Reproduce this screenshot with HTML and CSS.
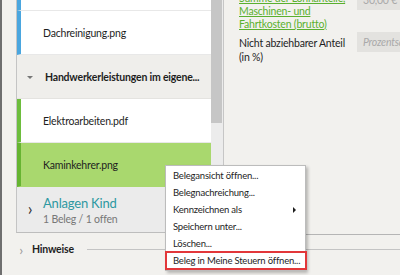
FILE: index.html
```html
<!DOCTYPE html>
<html lang="de">
<head>
  <meta charset="UTF-8" />
  <title>Belege</title>
  <link rel="stylesheet" href="styles.css">
</head>
<body>

  <div class="window">
    <div class="edge"></div>

    <div class="content">
      <div class="panels">

        <!-- Belegliste -->
        <div class="list-panel">
          <div class="list">
            <div class="item bar-blue"></div>
            <div class="item bar-blue">Dachreinigung.png</div>
            <div class="group">
              <span class="caret-down"></span>
              <span class="group-title">Handwerkerleistungen im eigene...</span>
            </div>
            <div class="item bar-green">Elektroarbeiten.pdf</div>
            <div class="item bar-green selected">Kaminkehrer.png</div>
            <div class="group closed">
              <span class="chevron">&rsaquo;</span>
              <div>
                <div class="closed-title">Anlagen Kind</div>
                <div class="closed-sub">1 Beleg / 1 offen</div>
              </div>
            </div>
          </div>
          <div class="scrollbar"><div class="thumb"></div></div>
        </div>

        <!-- Details -->
        <div class="detail">
          <div class="row first">
            <a class="label link" href="#">Summe der Lohnanteile,<br>Maschinen- und<br>Fahrtkosten (brutto)</a>
            <div class="field">30,00 €</div>
          </div>
          <div class="row">
            <div class="label">Nicht abziehbarer Anteil<br>(in %)</div>
            <div class="field placeholder">Prozentsatz</div>
          </div>
        </div>
      </div>

      <div class="hinweise">
        <span class="chevron small">&rsaquo;</span>
        <span class="hinweise-title">Hinweise</span>
        <span class="rule"></span>
      </div>
    </div>

    <!-- Kontextmenü -->
    <ul class="context-menu">
      <li>Belegansicht öffnen...</li>
      <li>Belegnachreichung...</li>
      <li class="has-sub">Kennzeichnen als</li>
      <li>Speichern unter...</li>
      <li>Löschen...</li>
      <li class="marked">Beleg in Meine Steuern öffnen...</li>
    </ul>
  </div>

</body>
</html>
```

FILE: styles.css
```css
/* Grundlayout */
body {
  margin: 0;
  background: #f2f1ee;
  font-family: Lato, "Open Sans", Arial, sans-serif;
  font-size: 10.5px;
  letter-spacing: -0.2px;
  color: #1e1e1e;
  overflow: hidden;
}

.window {
  position: relative;
  display: flex;
  width: 400px;
  height: 275px;
  overflow: hidden;
}

.edge {
  width: 2px;
  background: #6f6f6f;
  flex-shrink: 0;
}

.content {
  flex: 1;
  display: flex;
  flex-direction: column;
  min-width: 0;
}

.panels {
  display: flex;
  align-items: flex-start;
  padding-left: 14px;
}

/* Liste */
.list-panel {
  display: flex;
  width: 206px;
  height: 232px;
  border-left: 1px solid #c4c4c4;
  border-bottom: 1px solid #bdbdbd;
  flex-shrink: 0;
  overflow: hidden;
}

.list {
  width: 194px;
  margin-top: -33px;
}

.item {
  display: flex;
  align-items: center;
  height: 43px;
  padding-left: 22px;
  background: #fff;
  border-bottom: 1px solid #e8e8e8;
  border-left: 4px solid transparent;
  white-space: nowrap;
}

.bar-blue { border-left-color: #4aa6df; }
.bar-green { border-left-color: #6dbd3d; }

.item.selected {
  background: #a9d86e;
  border-left-color: #66b431;
  border-bottom-color: #a9d86e;
}

.group {
  display: flex;
  align-items: center;
  height: 43px;
  background: #efeeeb;
  border-bottom: 1px solid #e4e3e0;
  white-space: nowrap;
  overflow: hidden;
}

.caret-down {
  width: 0;
  height: 0;
  margin: 1px 12px 0 10px;
  border-left: 3px solid transparent;
  border-right: 3px solid transparent;
  border-top: 3px solid #777;
}

.group-title {
  font-weight: bold;
}

.group.closed {
  height: 45px;
  align-items: flex-start;
  background: #ebebeb;
  border-bottom: none;
}

.chevron {
  width: 26px;
  text-align: center;
  font-size: 17px;
  line-height: 1;
  color: #333;
  margin-top: 13px;
}

.closed-title {
  margin-top: 7px;
  font-size: 13px;
  line-height: 18px;
  color: #2d98a1;
}

.closed-sub {
  line-height: 14px;
  color: #777;
}

.scrollbar {
  width: 12px;
  background: #ececec;
}

.thumb {
  width: 11px;
  height: 123px;
  background: #c6c6c6;
}

/* Detailbereich */
.detail {
  flex: 1;
  height: 234px;
  border-left: 1px solid #c6c6c6;
  border-bottom: 1px solid #b5b5b5;
  padding-left: 15px;
  overflow: hidden;
}

.row {
  display: flex;
  margin-bottom: 1px;
}

.row.first {
  margin-top: -10px;
}

.label {
  width: 118px;
  flex-shrink: 0;
  padding-top: 4px;
  line-height: 14px;
  white-space: nowrap;
}

.row.first .label {
  padding-top: 2px;
  line-height: 13px;
}

.link {
  color: #5ab02f;
  text-decoration: underline;
}

.field {
  flex: 1;
  height: 20px;
  line-height: 20px;
  padding-left: 6px;
  background: #e3e2df;
  color: #a9a9a9;
  white-space: nowrap;
}

.field.placeholder {
  font-style: italic;
}

/* Hinweise */
.hinweise {
  display: flex;
  align-items: center;
  height: 28px;
  padding-left: 16px;
}

.chevron.small {
  width: 6px;
  margin: 0 8px -2px 0;
  font-size: 14px;
  color: #999;
}

.hinweise-title {
  font-weight: bold;
}

.rule {
  flex: 1;
  height: 1px;
  margin-left: 13px;
  background: #c4c4c4;
}

/* Kontextmenü */
.context-menu {
  position: absolute;
  left: 165px;
  top: 165px;
  width: 139px;
  margin: 0;
  padding: 1px 0;
  list-style: none;
  background: #fff;
  border: 1px solid #bcbcbc;
  box-shadow: 2px 2px 3px rgba(0, 0, 0, 0.25);
  font-size: 9.5px;
}

.context-menu li {
  position: relative;
  height: 17px;
  line-height: 17px;
  padding-left: 7px;
  white-space: nowrap;
}

.context-menu li.has-sub::after {
  content: "";
  position: absolute;
  right: 9px;
  top: 6px;
  border-top: 3px solid transparent;
  border-bottom: 3px solid transparent;
  border-left: 3px solid #1e1e1e;
}

.context-menu li.marked::after {
  content: "";
  position: absolute;
  left: -1px;
  right: -2px;
  top: -1px;
  bottom: -1px;
  border: 2px solid #e2373a;
}
```
